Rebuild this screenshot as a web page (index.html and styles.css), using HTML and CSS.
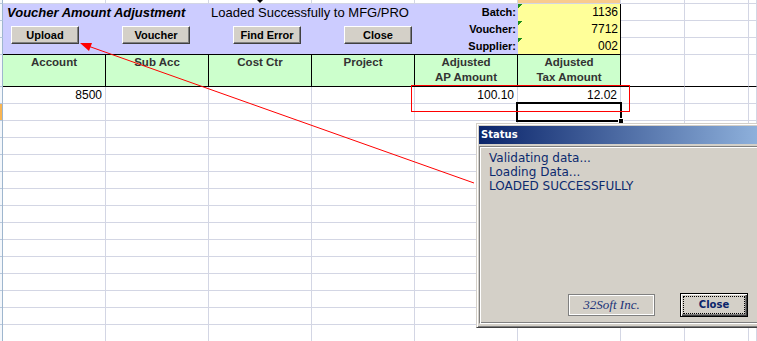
FILE: index.html
```html
<!DOCTYPE html>
<html lang="en">
<head>
    <meta charset="UTF-8">
    <meta name="viewport" content="width=device-width, initial-scale=1.0">
    <title>Voucher Amount Adjustment</title>
    <link rel="stylesheet" href="styles.css">
</head>
<body>
    <div class="sheet">
        <!-- row scrolled off at the top -->
        <div class="rh"></div>
        <div class="c"></div>
        <div class="c"></div>
        <div class="c"></div>
        <div class="c"></div>
        <div class="c"></div>
        <div class="c on"></div>
        <div class="c"></div>
        <div class="c"></div>
        <div class="c"></div>

        <!-- form header -->
        <div class="form">
            <div class="form-title">
                <div class="title">Voucher Amount Adjustment</div>
                <div class="loaded">Loaded Successfully to MFG/PRO</div>
            </div>
            <div class="buttons">
                <button class="btn">Upload</button>
                <button class="btn">Voucher</button>
                <button class="btn">Find Error</button>
                <button class="btn">Close</button>
            </div>
        </div>
        <div class="labels">
            <div>Batch:</div>
            <div>Voucher:</div>
            <div>Supplier:</div>
        </div>
        <div class="keys">
            <div class="key">1136</div>
            <div class="key">7712</div>
            <div class="key">002</div>
        </div>

        <div class="rh"></div>
        <div class="c"></div>
        <div class="c"></div>
        <div class="c"></div>
        <div class="rh"></div>
        <div class="c"></div>
        <div class="c"></div>
        <div class="c"></div>
        <div class="rh"></div>
        <div class="c"></div>
        <div class="c"></div>
        <div class="c"></div>

        <!-- column headings -->
        <div class="rh"></div>
        <div class="hd">Account</div>
        <div class="hd">Sub Acc</div>
        <div class="hd">Cost Ctr</div>
        <div class="hd">Project</div>
        <div class="hd">Adjusted<br>AP Amount</div>
        <div class="hd">Adjusted<br>Tax Amount</div>
        <div class="c hb"></div>
        <div class="c hb"></div>
        <div class="c hb"></div>

        <!-- data -->
        <div class="rh"></div>
        <div class="c num">8500</div>
        <div class="c"></div>
        <div class="c"></div>
        <div class="c"></div>
        <div class="c num">100.10</div>
        <div class="c num">12.02</div>
        <div class="c"></div>
        <div class="c"></div>
        <div class="c"></div>

        <!-- empty rows below -->
        <div class="rh rest"></div>
        <div class="col"></div>
        <div class="col"></div>
        <div class="col"></div>
        <div class="col"></div>
        <div class="col"></div>
        <div class="col"></div>
        <div class="col"></div>
        <div class="col"></div>
        <div class="col"></div>
    </div>

    <div class="pointer"></div>
    <div class="selection"><span class="handle"></span></div>

    <!-- red annotation: box round the amounts and arrow to Upload -->
    <svg class="arrow" width="757" height="341" viewBox="0 0 757 341">
        <rect x="411.5" y="85.5" width="218" height="26" fill="none" stroke="#ff0000" stroke-width="1"/>
        <line x1="474" y1="183" x2="88" y2="46" stroke="#ff0000" stroke-width="1"/>
        <polygon points="80,43 92,43 89,51" fill="#ff0000"/>
    </svg>

    <div class="dialog">
        <div class="titlebar">Status</div>
        <div class="panel">
            <div class="log">
                <div>Validating data...</div>
                <div>Loading Data...</div>
                <div>LOADED SUCCESSFULLY</div>
            </div>
            <div class="panel-foot">
                <div class="brand">32Soft Inc.</div>
                <button class="dlg-btn"><span>Close</span></button>
            </div>
        </div>
    </div>
</body>
</html>
```

FILE: styles.css
```css
* {
    margin: 0;
    padding: 0;
    box-sizing: border-box;
}

body {
    width: 757px;
    height: 341px;
    overflow: hidden;
    position: relative;
    background: #fff;
    font-family: 'Liberation Sans', Arial, sans-serif;
    font-size: 12px;
    color: #000;
}

.sheet {
    display: grid;
    grid-template-columns: 3px repeat(6, 103px) 64px 64px 1fr;
    grid-template-rows: 4px 17px 17px 17px 32px 17px 1fr;
    height: 341px;
}

.c {
    border-right: 1px solid #d3d6e4;
    border-bottom: 1px solid #d3d6e4;
    line-height: 16px;
    padding: 0 3px;
    white-space: nowrap;
}

.c.on {
    background: #f9cb8e;
}

.c.hb {
    border-bottom-color: #000;
}

.num {
    text-align: right;
}

.rh {
    border-right: 1px solid #9eb6ce;
    border-bottom: 1px solid #b8c8dc;
    background: #f4f7fb;
}

.rh.rest {
    border-bottom: none;
    background:
        linear-gradient(#f9b552, #f9b552) no-repeat top left / 100% 16px,
        repeating-linear-gradient(to bottom, #f4f7fb 0 16px, #b8c8dc 16px 17px);
}

/* form header block */
.form {
    grid-column: 2 / 6;
    grid-row: 2 / 5;
    background: #ccccff;
    border-bottom: 1px solid #000;
}

.form-title {
    display: flex;
    height: 17px;
    line-height: 17px;
    font-size: 13px;
    white-space: nowrap;
}

.title {
    width: 205px;
    padding-left: 4px;
    font-weight: bold;
    font-style: italic;
}

.loaded {
    padding-left: 3px;
}

.buttons {
    display: flex;
    gap: 43px;
    padding: 5px 0 0 8px;
}

.btn {
    width: 68px;
    height: 18px;
    background: #d4d0c8;
    border: 1px solid;
    border-color: #fff #404040 #404040 #fff;
    box-shadow: inset -1px -1px #808080;
    font-family: 'Liberation Sans', Arial, sans-serif;
    font-size: 11px;
    font-weight: bold;
    color: #000;
    line-height: 15px;
}

.labels {
    grid-column: 6 / 7;
    grid-row: 2 / 5;
    background: #ccccff;
    border-bottom: 1px solid #000;
    text-align: right;
    padding-right: 2px;
    font-size: 11px;
    font-weight: bold;
    line-height: 17px;
}

.keys {
    grid-column: 7 / 8;
    grid-row: 2 / 5;
    background: #ffff99;
    border-bottom: 1px solid #000;
    border-right: 1px solid #000;
}

.key {
    height: 17px;
    line-height: 17px;
    text-align: right;
    padding-right: 2px;
    background: linear-gradient(135deg, #1c8c1c 3px, transparent 3px) no-repeat top left / 6px 6px;
}

.hd {
    background: #ccffcc;
    border-right: 1px solid #000;
    border-bottom: 1px solid #000;
    text-align: center;
    font-size: 11.5px;
    font-weight: bold;
    line-height: 15px;
    color: #333;
}

.col {
    border-right: 1px solid #d3d6e4;
    background: repeating-linear-gradient(to bottom, transparent 0 16px, #d3d6e4 16px 17px);
}

/* overlays */
.pointer {
    position: absolute;
    left: 257px;
    top: 0;
    border-left: 3px solid transparent;
    border-right: 3px solid transparent;
    border-top: 3px solid #000;
}

.selection {
    position: absolute;
    left: 516px;
    top: 102px;
    width: 106px;
    height: 20px;
    border: 2px solid #000;
}

.handle {
    position: absolute;
    right: -4px;
    bottom: -4px;
    width: 6px;
    height: 6px;
    background: #000;
    border: 1px solid #fff;
}

.arrow {
    position: absolute;
    left: 0;
    top: 0;
    z-index: 1;
}

/* status dialog */
.dialog {
    position: absolute;
    z-index: 2;
    left: 476px;
    top: 123px;
    width: 381px;
    height: 205px;
    background: #d4d0c8;
    border: 1px solid;
    border-color: #d4d0c8 #404040 #404040 #d4d0c8;
    box-shadow: inset 1px 1px #fff, inset -1px -1px #808080;
    padding: 2px;
    display: flex;
    flex-direction: column;
    font-family: 'DejaVu Sans', Tahoma, sans-serif;
}

.titlebar {
    height: 18px;
    line-height: 18px;
    padding-left: 2px;
    background: linear-gradient(to right, #0a246a 0, #a6caf0 330px);
    color: #fff;
    font-size: 10px;
    font-weight: bold;
}

.panel {
    flex: 1;
    margin: 2px 0 1px;
    border: 1px solid;
    border-color: #808080 #fff #fff #808080;
    box-shadow: inset 1px 1px #fff, inset -1px -1px #808080;
    display: flex;
    flex-direction: column;
}

.log {
    padding: 4px 0 0 9px;
    font-size: 12px;
    line-height: 14px;
    color: #0c2a6e;
}

.panel-foot {
    margin-top: auto;
    display: flex;
    align-items: center;
    gap: 25px;
    padding: 0 0 6px 88px;
}

.brand {
    width: 87px;
    height: 22px;
    line-height: 20px;
    text-align: center;
    border: 1px solid #808080;
    box-shadow: inset 1px 1px #fff, inset -1px -1px #fff;
    font-family: 'Liberation Serif', 'Times New Roman', serif;
    font-style: italic;
    font-size: 13px;
    color: #1c3478;
}

.dlg-btn {
    width: 68px;
    height: 24px;
    padding: 2px;
    background: #d4d0c8;
    border: 1px solid #000;
    box-shadow: inset 1px 1px #fff, inset -1px -1px #404040, inset -2px -2px #808080;
    font-family: 'DejaVu Sans', Tahoma, sans-serif;
    font-size: 10px;
    font-weight: bold;
    color: #0a246a;
}

.dlg-btn span {
    display: block;
    height: 18px;
    line-height: 16px;
    border: 1px dotted #000;
}
```
